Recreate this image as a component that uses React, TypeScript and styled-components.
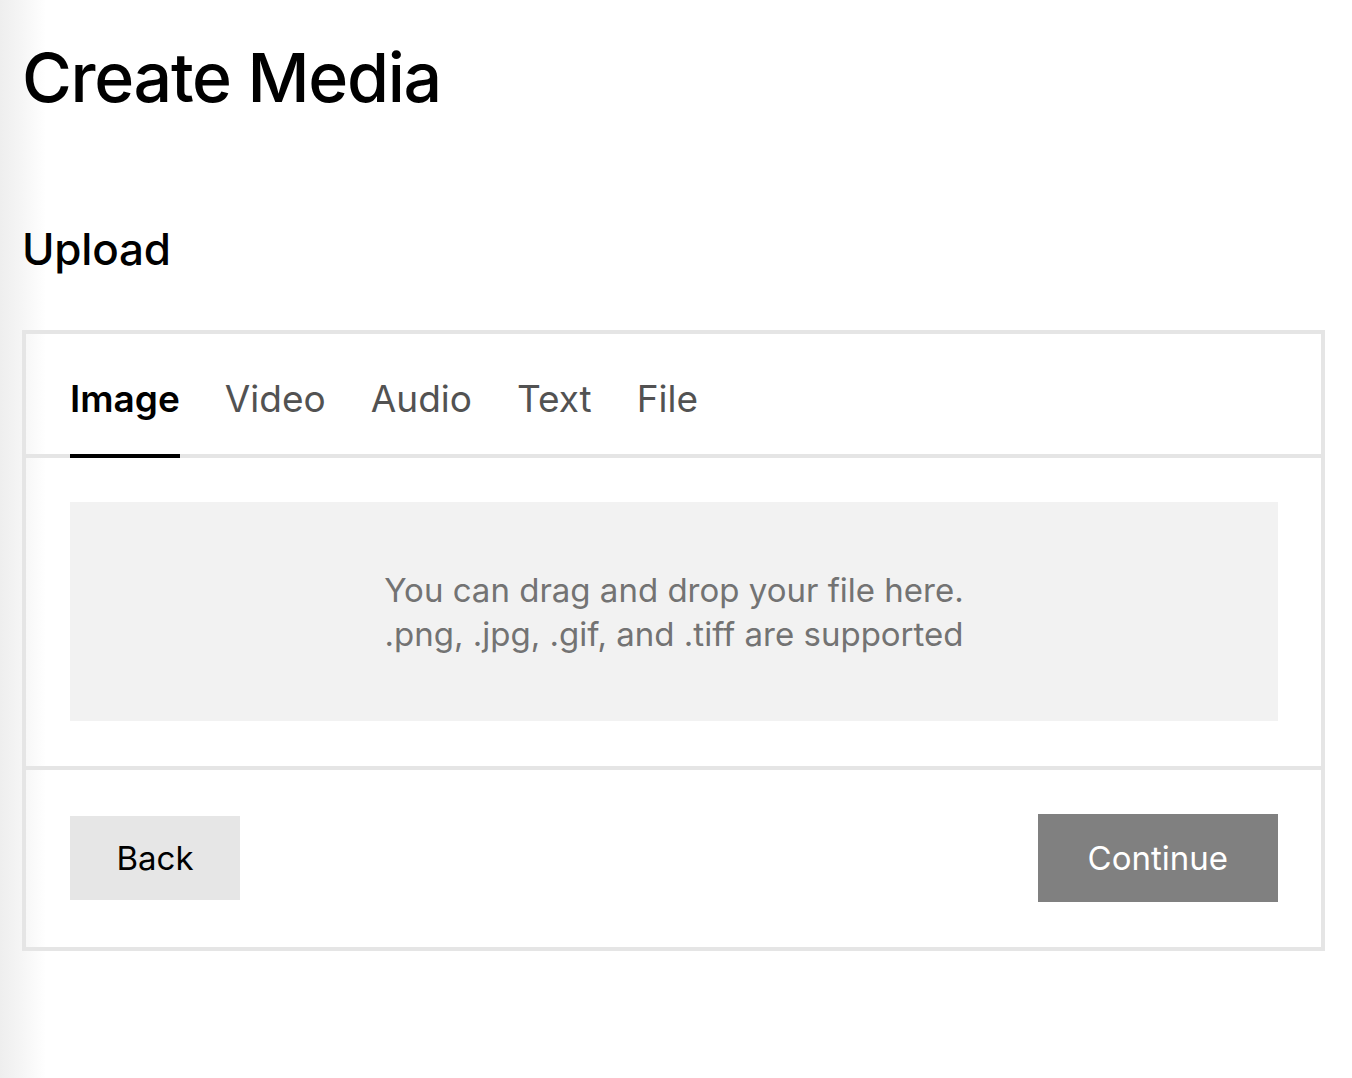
import React, { useState } from "react";
import styled, { createGlobalStyle } from "styled-components";

const GlobalStyle = createGlobalStyle`
  html, body {
    margin: 0;
    padding: 0;
    min-height: 100%;
  }
  body {
    font-family: Inter, "Noto Sans", "Liberation Sans", sans-serif;
    color: #000;
    background: linear-gradient(to right, #eeeeee 0px, #f4f4f4 18px, #ffffff 46px) fixed;
    min-height: 1078px;
  }
  * { box-sizing: border-box; }
`;

const Page = styled.main`
  padding: 36px 27px 0 22px;
`;

const Title = styled.h1`
  margin: 0;
  font-size: 68px;
  font-weight: 500;
  line-height: normal;
  letter-spacing: -1.3px;
`;

const Subtitle = styled.h2`
  margin: 104px 0 0;
  font-size: 44px;
  font-weight: 500;
  line-height: normal;
  letter-spacing: -0.2px;
`;

const Card = styled.section`
  margin-top: 54px;
  border: 4px solid #e5e5e5;
  background: transparent;
`;

const TabBar = styled.div`
  display: flex;
  gap: 45px;
  padding: 42px 44px 0;
  border-bottom: 4px solid #e5e5e5;
`;

const Tab = styled.button<{ $active?: boolean }>`
  appearance: none;
  background: none;
  border: none;
  border-bottom: 4px solid ${(p) => (p.$active ? "#000" : "transparent")};
  margin: 0 0 -4px;
  padding: 0 0 33px;
  font-family: inherit;
  font-size: 37px;
  line-height: normal;
  font-weight: ${(p) => (p.$active ? 600 : 400)};
  color: ${(p) => (p.$active ? "#000" : "#525252")};
  cursor: pointer;
`;

const Body = styled.div`
  padding: 44px 43px 45px 44px;
  border-bottom: 4px solid #e5e5e5;
`;

const DropZone = styled.div`
  height: 219px;
  background: #f2f2f2;
  display: flex;
  flex-direction: column;
  align-items: center;
  justify-content: center;
  text-align: center;
  color: #737373;
  font-size: 33px;
  line-height: 44px;
`;

const Footer = styled.div`
  display: flex;
  align-items: center;
  justify-content: space-between;
  padding: 44px 43px 45px 44px;
`;

const Button = styled.button<{ $primary?: boolean }>`
  appearance: none;
  border: none;
  font-family: inherit;
  font-size: 33px;
  font-weight: 400;
  height: ${(p) => (p.$primary ? "88px" : "84px")};
  padding: ${(p) => (p.$primary ? "0 50px" : "0 46.5px")};
  background: ${(p) => (p.$primary ? "#808080" : "#e6e6e6")};
  color: ${(p) => (p.$primary ? "#fff" : "#000")};
  cursor: pointer;
`;

const tabs = ["Image", "Video", "Audio", "Text", "File"];

export default function App() {
  const [active, setActive] = useState("Image");
  return (
    <>
      <GlobalStyle />
      <Page>
        <Title>Create Media</Title>
        <Subtitle>Upload</Subtitle>
        <Card>
          <TabBar>
            {tabs.map((t) => (
              <Tab key={t} $active={t === active} onClick={() => setActive(t)}>
                {t}
              </Tab>
            ))}
          </TabBar>
          <Body>
            <DropZone>
              <div>You can drag and drop your file here.</div>
              <div>.png, .jpg, .gif, and .tiff are supported</div>
            </DropZone>
          </Body>
          <Footer>
            <Button>Back</Button>
            <Button $primary>Continue</Button>
          </Footer>
        </Card>
      </Page>
    </>
  );
}
